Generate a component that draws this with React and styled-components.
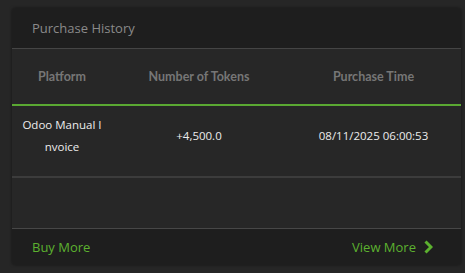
import React from 'react'
import styled, { createGlobalStyle } from 'styled-components'

const Global = createGlobalStyle`
    body{
        margin: 0;
        background: #262626;
        font-family: "Open Sans", "Liberation Sans", sans-serif;
    }
`

const Card = styled.div`
    margin: 8px 4px 8px 12px;
    width: 449px;
    height: 257px;
    background: #272727;
    border-radius: 4px;
    overflow: hidden;
    display: flex;
    flex-direction: column;
    box-shadow: 0 0 3px rgba(0,0,0,0.5);
`
const Header = styled.div`
    height: 40px;
    background: #1e1e1e;
    border-bottom: 1px solid #454545;
    display: flex;
    align-items: center;
    padding-left: 20px;
    font-size: 13px;
    color: #8a8a8a;
`
const Row = styled.div`
    display: grid;
    grid-template-columns: 100px 174px 1fr;
    height: ${p => p.h}px;
    box-sizing: border-box;
    padding-bottom: ${p => p.pb || 0}px;
    border-bottom: 2px solid ${p => p.line};
    align-items: center;
    text-align: center;
`
const HeadCell = styled.div`
    font-family: Lato, sans-serif;
    font-weight: bold;
    font-size: 12.5px;
    color: #767676;
`
const Cell = styled.div`
    font-size: 11.5px;
    color: #ececec;
    line-height: 22px;
    padding: 0 10px;
    word-break: break-all;
`
const Empty = styled.div`
    flex: 1;
    border-bottom: 1px solid #474747;
`
const Footer = styled.div`
    height: 36px;
    background: #1e1e1e;
    display: flex;
    align-items: center;
    justify-content: space-between;
    padding: 0 28px 0 20px;
`
const Link = styled.a`
    color: #5cb12f;
    font-size: 13px;
    display: flex;
    align-items: center;
    gap: 8px;
`

export default function App() {
    const cols = ['Platform', 'Number of Tokens', 'Purchase Time']
    const rows = [{ platform: 'Odoo Manual Invoice', tokens: '+4,500.0', time: '08/11/2025 06:00:53' }]
    return (
        <>
            <Global />
            <Card>
                <Header>Purchase History</Header>
                <Row h={57} line="#5aa832">
                    {cols.map(c => <HeadCell key={c}>{c}</HeadCell>)}
                </Row>
                {rows.map(r => (
                    <Row h={72} pb={10} line="#3c3c3c" key={r.time}>
                        <Cell>{r.platform}</Cell>
                        <Cell>{r.tokens}</Cell>
                        <Cell>{r.time}</Cell>
                    </Row>
                ))}
                <Empty />
                <Footer>
                    <Link>Buy More</Link>
                    <Link>
                        View More
                        <svg width="9" height="14" viewBox="0 0 9 14">
                            <path d="M1.5 1.5 L7 7 L1.5 12.5" stroke="#5cb12f" strokeWidth="3" fill="none" />
                        </svg>
                    </Link>
                </Footer>
            </Card>
        </>
    )
}
